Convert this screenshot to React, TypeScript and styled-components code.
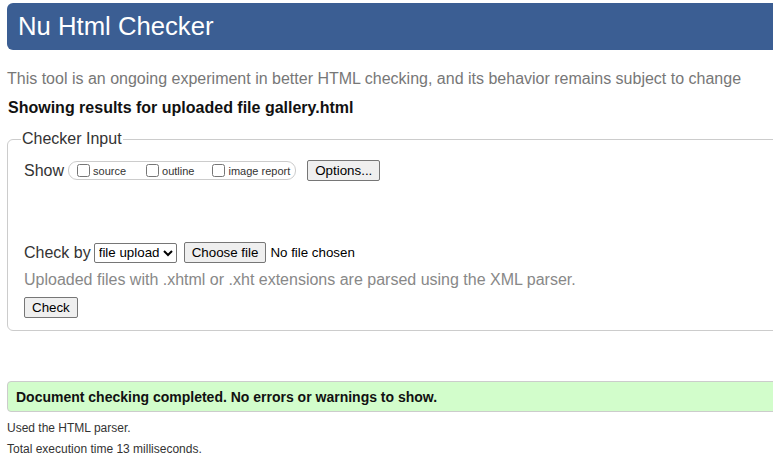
import { type ReactElement } from "react";
import { createGlobalStyle, styled } from "styled-components";

const GlobalStyle = createGlobalStyle`
  html, body {
    margin: 0;
    padding: 0;
    overflow: hidden;
    background: #fff;
  }
  body {
    font-family: "Liberation Sans", Arial, sans-serif;
    color: #222;
  }
`;

const Page = styled.div`
  width: 840px;
  padding: 3px 0 0 7px;
`;

const Header = styled.h1`
  margin: 0;
  height: 47px;
  display: flex;
  align-items: center;
  padding-left: 11px;
  background: #3b5e93;
  border-radius: 6px;
  color: #fff;
  font-size: 25.7px;
  font-weight: 400;
`;

const Intro = styled.p`
  margin: 20px 0 0;
  font-size: 16px;
  color: #777;
`;

const Heading = styled.h2`
  margin: 11px 0 0 1px;
  font-size: 16px;
  font-weight: 700;
  color: #111;
`;

const Fieldset = styled.fieldset`
  margin: 13px 0 0;
  padding: 6px 16px 12px;
  border: 1px solid #ccc;
  border-radius: 6px;
`;

const Legend = styled.legend`
  margin-left: -3px;
  padding: 0 1px;
  font-size: 16px;
  color: #333;
`;

const Row = styled.div<{ $top: number }>`
  display: flex;
  align-items: center;
  margin-top: ${p => p.$top}px;
  font-size: 16px;
  color: #333;
`;

const Pill = styled.span`
  display: inline-flex;
  align-items: center;
  height: 17px;
  margin-left: 4px;
  padding: 0 5px 0 4px;
  border: 1px solid #ccc;
  border-radius: 9px;
`;

const CheckLabel = styled.label<{ $gap: number }>`
  display: inline-flex;
  align-items: center;
  margin-right: ${p => p.$gap}px;
  font-size: 11px;
  color: #333;

  input {
    margin: 0 3px 0 4px;
    width: 13px;
    height: 13px;
  }
`;

const NativeButton = styled.button`
  height: 21px;
  padding: 1px 7px;
  font-family: "Liberation Sans", Arial, sans-serif;
  font-size: 13.33px;
  color: #000;
  background: #efefef;
  border: 1px solid #767676;
  border-radius: 2px;
`;

const OptionsButton = styled(NativeButton)`
  margin-left: 11px;
`;

const Select = styled.select`
  height: 20px;
  margin-left: 3px;
  font-family: "Liberation Sans", Arial, sans-serif;
  font-size: 13.33px;
  color: #000;
  border: 1px solid #767676;
  border-radius: 2px;
  background: #fff;
`;

const FileButton = styled(NativeButton)`
  margin-left: 7px;
`;

const FileStatus = styled.span`
  margin-left: 4px;
  font-size: 13.33px;
  color: #000;
`;

const Note = styled.p`
  margin: 8px 0 0;
  font-size: 16px;
  color: #888;
`;

const CheckButton = styled(NativeButton)`
  margin-top: 8px;
`;

const Success = styled.p`
  margin: 50px 0 0;
  height: 29px;
  display: flex;
  align-items: center;
  padding-left: 8px;
  background: #d2fdcb;
  border: 1px solid #ccc;
  border-radius: 4px;
  font-size: 14px;
  font-weight: 700;
  color: #111;
`;

const Detail = styled.p<{ $top: number }>`
  margin: ${p => p.$top}px 0 0;
  font-size: 12px;
  color: #333;
`;

export default function App(): ReactElement {
  return (
    <>
      <GlobalStyle />
      <Page>
        <Header>Nu Html Checker</Header>
        <Intro>
          This tool is an ongoing experiment in better HTML checking, and its
          behavior remains subject to change
        </Intro>
        <Heading>Showing results for uploaded file gallery.html</Heading>
        <Fieldset>
          <Legend>Checker Input</Legend>
          <Row $top={6}>
            Show
            <Pill>
              <CheckLabel $gap={16}>
                <input type="checkbox" />
                source
              </CheckLabel>
              <CheckLabel $gap={14}>
                <input type="checkbox" />
                outline
              </CheckLabel>
              <CheckLabel $gap={0}>
                <input type="checkbox" />
                image report
              </CheckLabel>
            </Pill>
            <OptionsButton>Options...</OptionsButton>
          </Row>
          <Row $top={61}>
            Check by
            <Select defaultValue="file">
              <option value="file">file upload</option>
              <option value="address">address</option>
              <option value="text">text input</option>
            </Select>
            <FileButton>Choose file</FileButton>
            <FileStatus>No file chosen</FileStatus>
          </Row>
          <Note>
            Uploaded files with .xhtml or .xht extensions are parsed using the
            XML parser.
          </Note>
          <CheckButton>Check</CheckButton>
        </Fieldset>
        <Success>Document checking completed. No errors or warnings to show.</Success>
        <Detail $top={9}>Used the HTML parser.</Detail>
        <Detail $top={7}>Total execution time 13 milliseconds.</Detail>
      </Page>
    </>
  );
}
